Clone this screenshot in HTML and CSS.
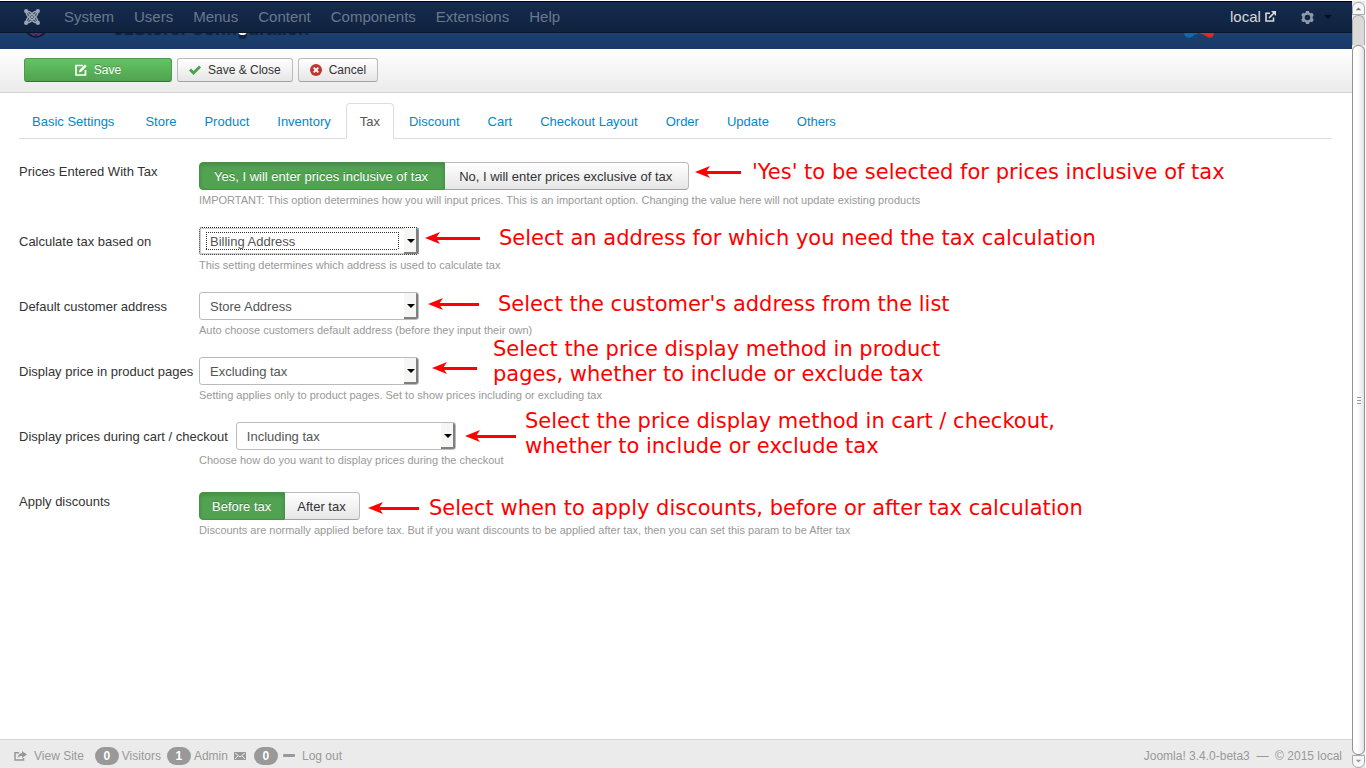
FILE: index.html
```html
<!DOCTYPE html>
<html lang="en">
<head>
<meta charset="utf-8">
<title>J2Store: Configuration</title>
<link rel="stylesheet" href="styles.css">
</head>
<body>
<div class="page">
  <nav class="navbar">
    <a class="brand" href="#" aria-label="Joomla">
      <svg width="16" height="16" viewBox="0 0 16 16" fill="none" stroke="currentColor" stroke-width="1.700">
        <path d="M3 3L13 13M13 3L3 13" stroke-width="1.300"/>
        <path d="M2 2.500C4.500 1.500 6 2.500 8 4.500C10 2.500 11.500 1.500 14 2.500M2 13.500C4.500 14.500 6 13.500 8 11.500C10 13.500 11.500 14.500 14 13.500M2.500 2C1.500 4.500 2.500 6 4.500 8C2.500 10 1.500 11.500 2.500 14M13.500 2C14.500 4.500 13.500 6 11.500 8C13.500 10 14.500 11.500 13.500 14M8 4.500L11.500 8L8 11.500L4.500 8Z" stroke-width="1.500"/>
        <g fill="currentColor" stroke="none"><circle cx="2.100" cy="2.100" r="2.100"/><circle cx="13.900" cy="2.100" r="2.100"/><circle cx="2.100" cy="13.900" r="2.100"/><circle cx="13.900" cy="13.900" r="2.100"/></g>
      </svg>
    </a>
    <a href="#">System</a><a href="#">Users</a><a href="#">Menus</a><a href="#">Content</a><a href="#">Components</a><a href="#">Extensions</a><a href="#">Help</a>
    <div class="nav-right">
      <a class="site" href="#">local
        <svg width="11" height="11" viewBox="0 0 11 11" fill="none" stroke="currentColor" stroke-width="1.600"><path d="M5 2.300H1V10H8.500V6.500M4 7L9 2"/><path d="M6 0H11V5Z" fill="currentColor" stroke="none"/></svg>
      </a>
      <button class="gear" aria-label="Settings">
        <svg width="13" height="13" viewBox="0 0 13 13"><path fill="#8d98a8" fill-rule="evenodd" d="M5 0H8L8.300 1.500L9.600 2.200L11.200 1.700L12.800 4.300L11.700 5.500V7.500L12.800 8.700L11.200 11.300L9.600 10.800L8.300 11.500L8 13H5L4.700 11.500L3.400 10.800L1.800 11.300L.200 8.700L1.300 7.500V5.500L.200 4.300L1.800 1.700L3.400 2.200L4.700 1.500ZM6.500 3.700A2.800 2.800 0 1 0 6.500 9.300A2.800 2.800 0 1 0 6.500 3.700Z"/></svg>
        <svg width="8" height="4" viewBox="0 0 8 4"><path d="M0 0H8L4 4Z" fill="#060d18"/></svg>
      </button>
    </div>
  </nav>
  <header class="header">
    <svg class="header-icon" width="24" height="24" viewBox="0 0 24 24"><circle cx="12" cy="12" r="11" fill="#1c2c54" stroke="#0e1a33" stroke-width="1.500"/><path d="M7 19l2.500 2 2.500-2 2.500 2 2.500-2" fill="none" stroke="#6d2b78" stroke-width="1.500"/></svg>
    <h1>J2Store: Configuration</h1>
    <svg class="logo" width="30" height="30" viewBox="0 0 30 30"><path d="M0 25C3 24 6 23 10 24L15 25L10 27C8 30 4 31 1 28Z" fill="#1268ae"/><path d="M15 25C19 23 25 23 30 25C30 30 25 31 22 28Q19 26 15 25Z" fill="#e02828"/></svg>
  </header>
  <div class="toolbar">
    <button class="btn btn-save"><svg width="12" height="12" viewBox="0 0 12 12" fill="none" stroke="#fff" stroke-width="1.700"><path d="M8 1.500H1V11H10.500V6"/><path d="M4 8.500L4.500 6L10 .500L11.700 2.200L6.300 7.700Z" fill="#fff" stroke="none"/></svg>Save</button>
    <button class="btn"><svg width="12" height="12" viewBox="0 0 12 12"><path d="M0 6.500L2 4.500L4.500 7L10 1.500L12 3.500L4.500 11Z" fill="#46a546"/></svg>Save &amp; Close</button>
    <button class="btn"><svg width="12" height="12" viewBox="0 0 12 12"><circle cx="6" cy="6" r="6" fill="#bd362f"/><path d="M3.700 3.700L8.300 8.300M8.300 3.700L3.700 8.300" stroke="#fff" stroke-width="1.800"/></svg>Cancel</button>
  </div>
  <main class="content">
    <nav class="tabs">
      <a class="first" href="#">Basic Settings</a><a href="#">Store</a><a href="#">Product</a><a href="#">Inventory</a><a class="active" href="#">Tax</a><a href="#">Discount</a><a href="#">Cart</a><a href="#">Checkout Layout</a><a href="#">Order</a><a href="#">Update</a><a href="#">Others</a>
    </nav>
    <form class="settings">
      <div class="field">
        <div class="line line-top"><span class="label" id="l1">Prices Entered With Tax</span>
          <div class="group wide" role="group" aria-labelledby="l1"><button type="button" class="on">Yes, I will enter prices inclusive of tax</button><button type="button">No, I will enter prices exclusive of tax</button></div></div>
        <p class="hint">IMPORTANT: This option determines how you will input prices. This is an important option. Changing the value here will not update existing products</p>
      </div>
      <div class="field">
        <div class="line"><label class="label" for="based">Calculate tax based on</label><span class="select focused"><select id="based"><option>Billing Address</option></select></span></div>
        <p class="hint">This setting determines which address is used to calculate tax</p>
      </div>
      <div class="field">
        <div class="line"><label class="label" for="addr">Default customer address</label><span class="select"><select id="addr"><option>Store Address</option></select></span></div>
        <p class="hint">Auto choose customers default address (before they input their own)</p>
      </div>
      <div class="field">
        <div class="line"><label class="label" for="prod">Display price in product pages</label><span class="select"><select id="prod"><option>Excluding tax</option></select></span></div>
        <p class="hint">Setting applies only to product pages. Set to show prices including or excluding tax</p>
      </div>
      <div class="field last-select">
        <div class="line"><label class="label" for="cart">Display prices during cart / checkout</label><span class="select"><select id="cart"><option>Including tax</option></select></span></div>
        <p class="hint">Choose how do you want to display prices during the checkout</p>
      </div>
      <div class="field">
        <div class="line line-top"><span class="label" id="l6">Apply discounts</span>
          <div class="group" role="group" aria-labelledby="l6"><button type="button" class="on">Before tax</button><button type="button">After tax</button></div></div>
        <p class="hint">Discounts are normally applied before tax. But if you want discounts to be applied after tax, then you can set this param to be After tax</p>
      </div>
    </form>
  </main>
  <footer class="status">
    <a class="view" href="#"><svg width="13" height="10" viewBox="0 0 13 10"><path d="M5 1.700H1V9H9.500V7" fill="none" stroke="currentColor" stroke-width="1.500"/><path d="M8 0L13 3.500L8 7V5C6 5 5 5.500 3.500 7C4 4 5.500 2.200 8 2Z" fill="currentColor"/></svg>View Site</a>
    <span class="badge">0</span><span>Visitors</span>
    <span class="badge admin">1</span><span>Admin</span>
    <svg class="mail" width="12" height="8" viewBox="0 0 12 8"><path d="M0 0H12V8H0Z" fill="#999"/><path d="M1 1L6 5L11 1M1 7L4 4M11 7L8 4" fill="none" stroke="#ebebeb"/></svg>
    <span class="badge">0</span>
    <a class="logout" href="#"><svg width="12" height="3" viewBox="0 0 12 3"><rect width="12" height="3" rx="1" fill="currentColor"/></svg>Log out</a>
    <span class="version">Joomla! 3.4.0-beta3 &nbsp;—&nbsp; © 2015 local</span>
  </footer>
</div>
<div class="scrollbar" aria-hidden="true">
  <svg class="up" viewBox="0 0 12 12"><path d="M3 8L6 5L9 8Z" fill="#777"/></svg>
  <div class="trough"></div>
  <div class="thumb"><i></i><i></i><i></i></div>
  <svg class="down" viewBox="0 0 12 12"><path d="M3 4L6 7L9 4Z" fill="#999"/></svg>
</div>
<svg width="0" height="0" class="defs"><defs><symbol id="head" viewBox="0 0 15 12"><path d="M0 6L15 0L11 6L15 12Z" fill="#f00"/></symbol></defs></svg>
<aside class="notes">
  <div class="note n1"><span class="arrow"><svg width="15" height="12"><use href="#head"/></svg></span><p>'Yes' to be selected for prices inclusive of tax</p></div>
  <div class="note n2"><span class="arrow"><svg width="15" height="12"><use href="#head"/></svg></span><p>Select an address for which you need the tax calculation</p></div>
  <div class="note n3"><span class="arrow"><svg width="15" height="12"><use href="#head"/></svg></span><p>Select the customer's address from the list</p></div>
  <div class="note n4"><span class="arrow"><svg width="15" height="12"><use href="#head"/></svg></span><p>Select the price display method in product<br>pages, whether to include or exclude tax</p></div>
  <div class="note n5"><span class="arrow"><svg width="15" height="12"><use href="#head"/></svg></span><p>Select the price display method in cart / checkout,<br>whether to include or exclude tax</p></div>
  <div class="note n6"><span class="arrow"><svg width="15" height="12"><use href="#head"/></svg></span><p>Select when to apply discounts, before or after tax calculation</p></div>
</aside>
</body>
</html>
```
FILE: styles.css
```css
* { box-sizing: border-box; }
body {
  margin: 0;
  height: 100vh;
  display: flex;
  overflow: hidden;
  position: relative;
  padding-top: 1px;
  background: #fff;
  color: #333;
  font: 13px/18px "Liberation Sans", Arial, sans-serif;
}
a { text-decoration: none; color: inherit; }
p, h1 { margin: 0; }
button, select { font: inherit; color: inherit; }
.page { flex: 1; min-width: 0; display: flex; flex-direction: column; }

.navbar {
  height: 32px;
  position: relative;
  z-index: 1;
  display: flex;
  align-items: center;
  gap: 20px;
  padding: 0 20px 0 24px;
  background: linear-gradient(#142b50, #10223e);
  border-top: 1px solid #000;
  border-bottom: 1px solid #0b172a;
  color: #6b788c;
  font-size: 15px;
}
.brand { display: flex; margin-right: 4px; color: #9ba4b2; }
.nav-right { margin-left: auto; display: flex; align-items: center; gap: 25px; }
.site { color: #d9d9d9; }
.gear { display: flex; align-items: center; gap: 10px; padding: 0; border: 0; background: none; }

.header {
  height: 16px;
  display: flex;
  align-items: flex-end;
  padding: 0 138px 11px 24px;
  background: linear-gradient(#1c4070, #1a3867);
  color: #fff;
}
.header svg { flex: none; }
.header h1 {
  margin: 0 0 2px 66px;
  font-size: 18px;
  line-height: 22px;
  white-space: nowrap;
  text-shadow: 0 2px 0 #10203c, 0 4px 1px #10203c;
}
.logo { margin-left: auto; }

.toolbar {
  height: 44px;
  display: flex;
  align-items: center;
  gap: 5px;
  padding: 0 24px 2px;
  background: linear-gradient(#fff, #ebebeb);
  border-bottom: 1px solid #d3d3d3;
}
.btn {
  height: 24px;
  display: flex;
  align-items: center;
  justify-content: center;
  gap: 7px;
  padding: 0 11px;
  border: 1px solid #bbb;
  border-bottom-color: #a2a2a2;
  border-radius: 3px;
  background: linear-gradient(#fff, #e6e6e6);
  font-size: 12px;
}
.btn-save {
  width: 148px;
  border-color: #4a9e4a #4a9e4a #387038;
  background: linear-gradient(#62c462, #51a351);
  color: #fff;
  text-shadow: 0 -1px 0 rgba(0, 0, 0, .25);
}

.content { flex: 1; padding: 10px 20px 0 19px; }
.tabs { display: flex; gap: 2px; height: 36px; border-bottom: 1px solid #ddd; }
.tabs a { height: 36px; padding: 9px 12px; border: 1px solid transparent; color: #08c; }
.tabs .first { margin-right: 3px; }
.tabs .active {
  padding: 9px 13px;
  border-color: #ddd #ddd #fff;
  border-radius: 4px 4px 0 0;
  background: #fff;
  color: #555;
}
.settings { padding-top: 23px; }
.field { height: 65px; }
.last-select { height: 70px; }
.line { display: flex; align-items: center; }
.line-top { align-items: flex-start; }
.label { min-width: 175px; margin-right: 5px; padding-top: 1px; white-space: nowrap; }
.last-select .label { margin-right: 8px; }
.hint { padding: 1px 0 0 180px; color: #999; font-size: 11px; }
.group { display: flex; }
.group button {
  height: 28px;
  padding: 1px 13px 0 12px;
  border: 1px solid #bbb;
  border-bottom-color: #a2a2a2;
  border-left-width: 0;
  border-radius: 0 4px 4px 0;
  background: linear-gradient(#fff, #e6e6e6);
}
.wide button { padding: 1px 16px 0 14px; }
.group .on {
  border: 1px solid #489048;
  border-radius: 4px 0 0 4px;
  background: #51a351;
  box-shadow: inset 0 2px 4px rgba(0, 0, 0, .15);
  color: #fff;
  text-shadow: 0 -1px 0 rgba(0, 0, 0, .25);
}
.select { position: relative; width: 220px; height: 28px; color: #555; }
.select select {
  appearance: none;
  width: 100%;
  height: 100%;
  padding: 1px 10px 0;
  border: 1px solid #bbb;
  border-radius: 3px;
  background: #fff;
}
.select::before {
  content: "";
  position: absolute;
  right: 1px;
  top: 1px;
  bottom: 1px;
  width: 12px;
  border-right: 2px solid #808080;
  border-bottom: 2px solid #808080;
  border-radius: 0 2px 2px 0;
  background: #f6f6f4;
}
.select::after {
  content: "";
  position: absolute;
  right: 4px;
  top: 12px;
  border: solid transparent;
  border-width: 4px 4px 0;
  border-top-color: #000;
}
.focused select {
  border: 1px dotted #222;
  box-shadow: inset 0 0 0 1px #ccc;
  background:
    repeating-linear-gradient(90deg, #333 0 1px, transparent 1px 2px) 6px 4px / 192px 1px no-repeat,
    repeating-linear-gradient(90deg, #333 0 1px, transparent 1px 2px) 6px 21px / 192px 1px no-repeat,
    repeating-linear-gradient(#333 0 1px, transparent 1px 2px) 6px 4px / 1px 18px no-repeat,
    repeating-linear-gradient(#333 0 1px, transparent 1px 2px) 198px 4px / 1px 18px no-repeat,
    #fff;
}

.status {
  height: 29px;
  display: flex;
  align-items: center;
  gap: 3px;
  padding: 3px 10px 0 14px;
  border-top: 1px solid #d4d4d4;
  background: #ebebeb;
  color: #999;
  font-size: 12px;
}
.status a { display: flex; align-items: center; gap: 7px; }
.view { margin-right: 8px; }
.badge {
  width: 24px;
  border-radius: 9px;
  background: #999;
  color: #fff;
  font-weight: bold;
  text-align: center;
}
.admin { margin-left: 3px; }
.mail { margin: 0 5px 0 3px; }
.logout { margin-left: 2px; }
.version { margin-left: auto; }

.scrollbar {
  width: 13px;
  margin-right: 1px;
  display: flex;
  flex-direction: column;
  padding: 1px 0 0;
  background: #e9e8e6;
}
.up, .down { height: 13px; width: 13px; border: 1px solid #aaa; background: #f7f7f7; }
.up { border-radius: 6px 6px 0 0; }
.down { border-radius: 0 0 6px 6px; }
.trough { height: 30px; border: solid #aaa; border-width: 1px 1px 0; border-radius: 6px 6px 0 0; background: #dcdad8; }
.thumb {
  flex: 1;
  display: flex;
  flex-direction: column;
  align-items: center;
  justify-content: center;
  gap: 2px;
  border: 1px solid #95918c;
  border-radius: 6px;
  background: linear-gradient(90deg, #fff 40%, #e4e4e4);
}
.thumb i { width: 4px; height: 1px; background: #999; }
.defs { position: absolute; }

.note {
  position: absolute;
  display: flex;
  gap: 19px;
  color: #f00;
  font: 21px/25px "DejaVu Sans", sans-serif;
  white-space: nowrap;
}
.arrow {
  width: 51px;
  height: 12px;
  margin-top: 6px;
  display: flex;
  background: linear-gradient(#f00, #f00) right center / calc(100% - 10px) 3px no-repeat;
}
.n1 { left: 695px; top: 160px; gap: 11px; }
.n1 .arrow { width: 46px; }
.n2 { left: 425px; top: 226px; }
.n2 .arrow { width: 55px; }
.n3 { left: 428px; top: 292px; }
.n4 { left: 432px; top: 337px; gap: 16px; }
.n4 .arrow { width: 45px; margin-top: 25px; }
.n5 { left: 465px; top: 409px; gap: 9px; }
.n5 .arrow { margin-top: 21px; }
.n6 { left: 368px; top: 496px; gap: 10px; }
```
